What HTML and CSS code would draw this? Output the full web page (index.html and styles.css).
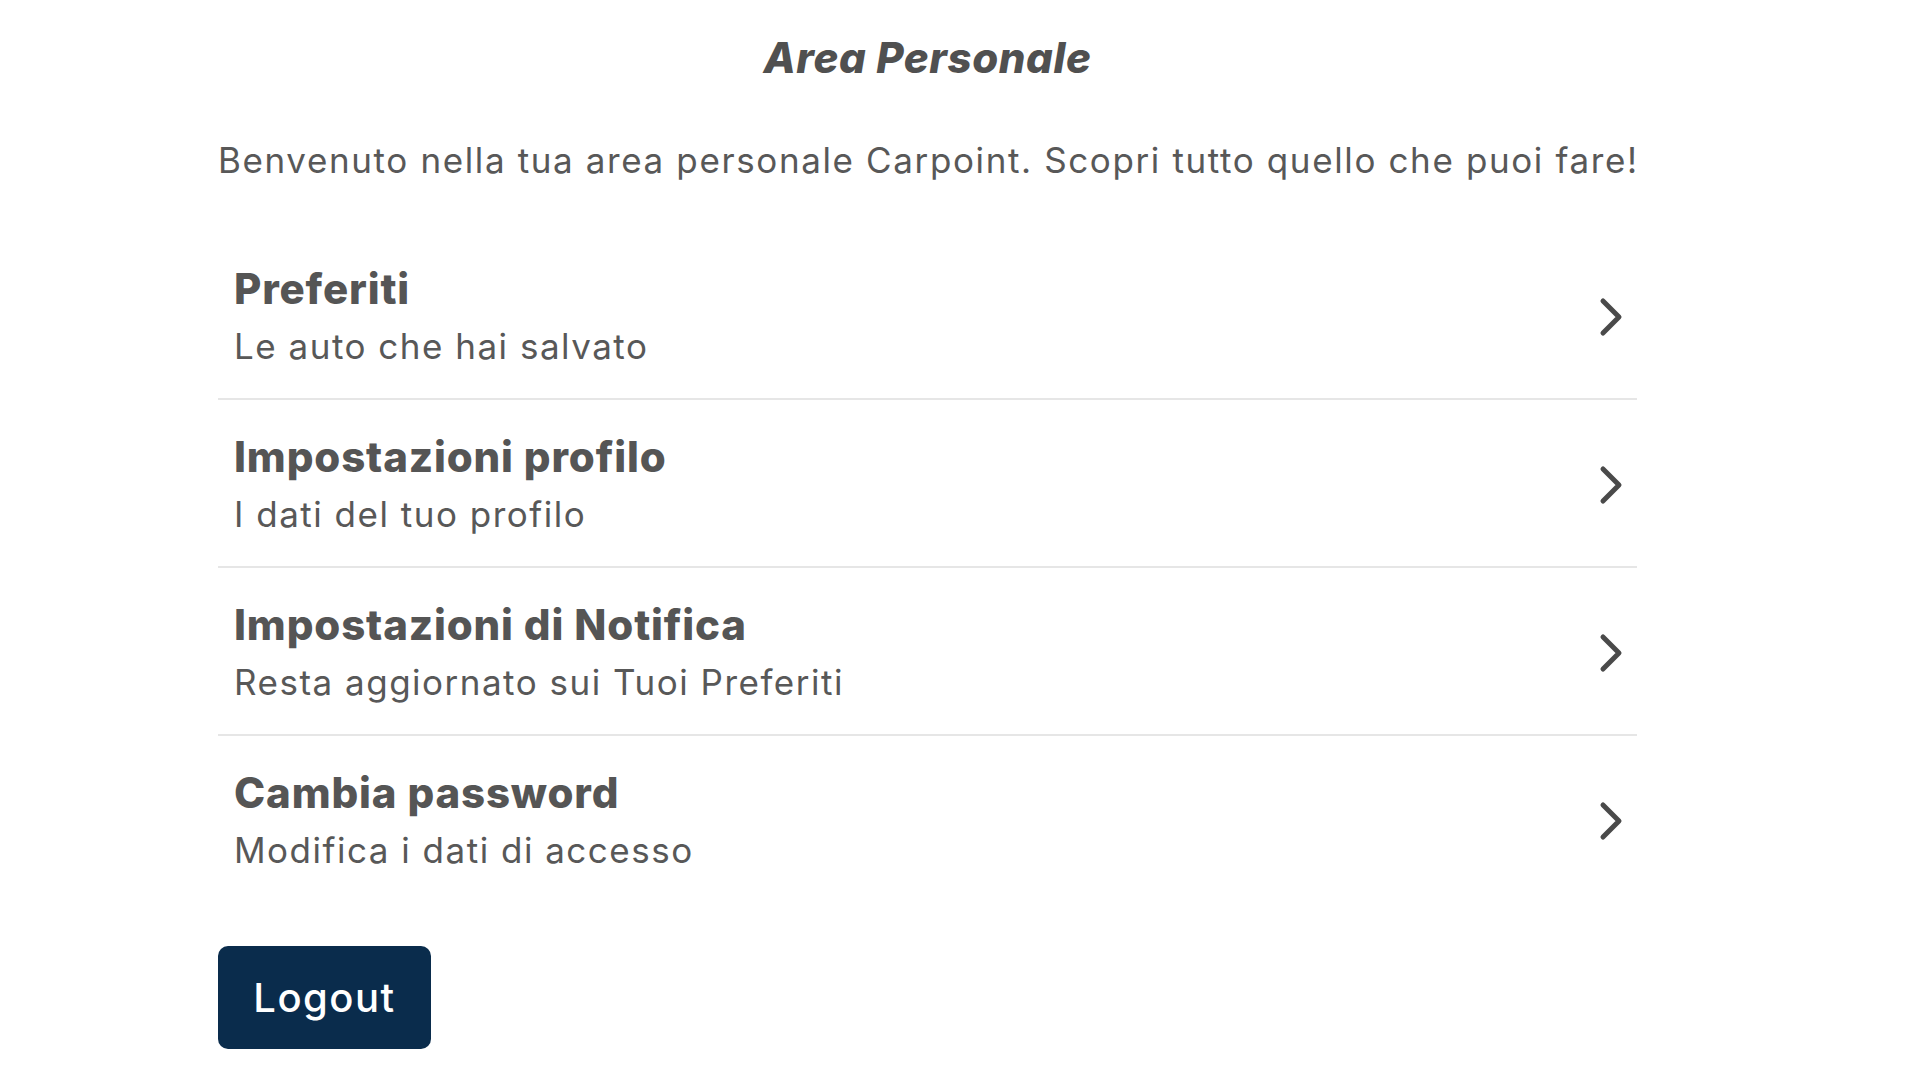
FILE: index.html
```html
<!DOCTYPE html>
<html lang="it">
<head>
<meta charset="utf-8">
<title>Area Personale</title>
<link rel="stylesheet" href="styles.css">
</head>
<body>
<main class="page">
  <h1 class="page-title">Area Personale</h1>
  <p class="intro">Benvenuto nella tua area personale Carpoint. Scopri tutto quello che puoi fare!</p>
  <ul class="menu">
    <li class="menu-item">
      <div class="menu-text">
        <div class="menu-title">Preferiti</div>
        <div class="menu-sub">Le auto che hai salvato</div>
      </div>
      <svg class="chevron" viewBox="0 0 24 40" width="24" height="40"><polyline points="4,4 20,20 4,36"/></svg>
    </li>
    <li class="menu-item">
      <div class="menu-text">
        <div class="menu-title">Impostazioni profilo</div>
        <div class="menu-sub">I dati del tuo profilo</div>
      </div>
      <svg class="chevron" viewBox="0 0 24 40" width="24" height="40"><polyline points="4,4 20,20 4,36"/></svg>
    </li>
    <li class="menu-item">
      <div class="menu-text">
        <div class="menu-title">Impostazioni di Notifica</div>
        <div class="menu-sub">Resta aggiornato sui Tuoi Preferiti</div>
      </div>
      <svg class="chevron" viewBox="0 0 24 40" width="24" height="40"><polyline points="4,4 20,20 4,36"/></svg>
    </li>
    <li class="menu-item">
      <div class="menu-text">
        <div class="menu-title">Cambia password</div>
        <div class="menu-sub">Modifica i dati di accesso</div>
      </div>
      <svg class="chevron" viewBox="0 0 24 40" width="24" height="40"><polyline points="4,4 20,20 4,36"/></svg>
    </li>
  </ul>
  <button class="logout" type="button">Logout</button>
</main>
</body>
</html>
```
FILE: styles.css
```css
html, body {
  margin: 0;
  padding: 0;
  background: #ffffff;
}
body {
  font-family: Inter, "Noto Sans", sans-serif;
  color: #555555;
}
.page {
  width: 1419px;
  margin: 0 0 0 218px;
  padding-top: 29px;
}
.page-title {
  margin: 0;
  font-size: 42px;
  line-height: 58px;
  font-weight: 800;
  font-style: italic;
  letter-spacing: 0.6px;
  text-align: center;
  color: #505050;
}
.intro {
  margin: 49px 0 0;
  font-size: 35px;
  line-height: 48px;
  font-weight: 400;
  letter-spacing: 1.62px;
  color: #585858;
  white-space: nowrap;
}
.menu {
  list-style: none;
  margin: 48px 0 0;
  padding: 0;
}
.menu-item {
  display: flex;
  align-items: center;
  justify-content: space-between;
  padding: 28px 14px 24px 16px;
  border-bottom: 2px solid #e6e6e6;
}
.menu-item:last-child {
  border-bottom: none;
}
.menu-title {
  font-size: 42px;
  line-height: 58px;
  font-weight: 800;
  letter-spacing: 0.85px;
  color: #555555;
}
.menu-sub {
  font-size: 35px;
  line-height: 56px;
  font-weight: 400;
  letter-spacing: 1.5px;
  color: #585858;
}
.chevron {
  flex: none;
  fill: none;
  stroke: #4a4a4a;
  stroke-width: 5;
  stroke-linecap: round;
  stroke-linejoin: round;
}
.logout {
  display: block;
  margin-top: 44px;
  width: 213px;
  height: 103px;
  padding: 0;
  border: none;
  border-radius: 10px;
  background: #0a2c4c;
  color: #ffffff;
  font-family: Inter, "Noto Sans", sans-serif;
  font-size: 40px;
  font-weight: 500;
  letter-spacing: 1.5px;
  cursor: pointer;
}
```
